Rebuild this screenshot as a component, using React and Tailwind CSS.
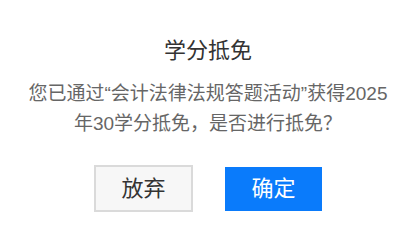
export default function App() {
  return (
    <div
      className="flex h-[235px] w-[416px] flex-col items-center bg-white px-[20px] pt-[36px] [text-autospace:no-autospace]"
      style={{ fontFamily: '"Liberation Sans", "Noto Sans CJK SC", sans-serif' }}
    >
      <h1 className="text-[22px] leading-[30px] font-normal text-[#333333]">学分抵免</h1>
      <p className="mt-[13px] text-center text-[19px] leading-[30px] whitespace-nowrap text-[#666666]">
        您已通过“会计法律法规答题活动”获得2025
        <br />
        年30学分抵免，是否进行抵免？
      </p>
      <div className="mt-[26px] flex items-center gap-[32px]">
        <button className="flex h-[47px] w-[99px] items-center justify-center border-2 border-[#dadada] bg-[#f7f7f7] text-[22px] text-[#333333]">
          放弃
        </button>
        <button className="flex h-[44px] w-[97px] items-center justify-center bg-[#0a7bfb] text-[22px] text-white">
          确定
        </button>
      </div>
    </div>
  )
}
